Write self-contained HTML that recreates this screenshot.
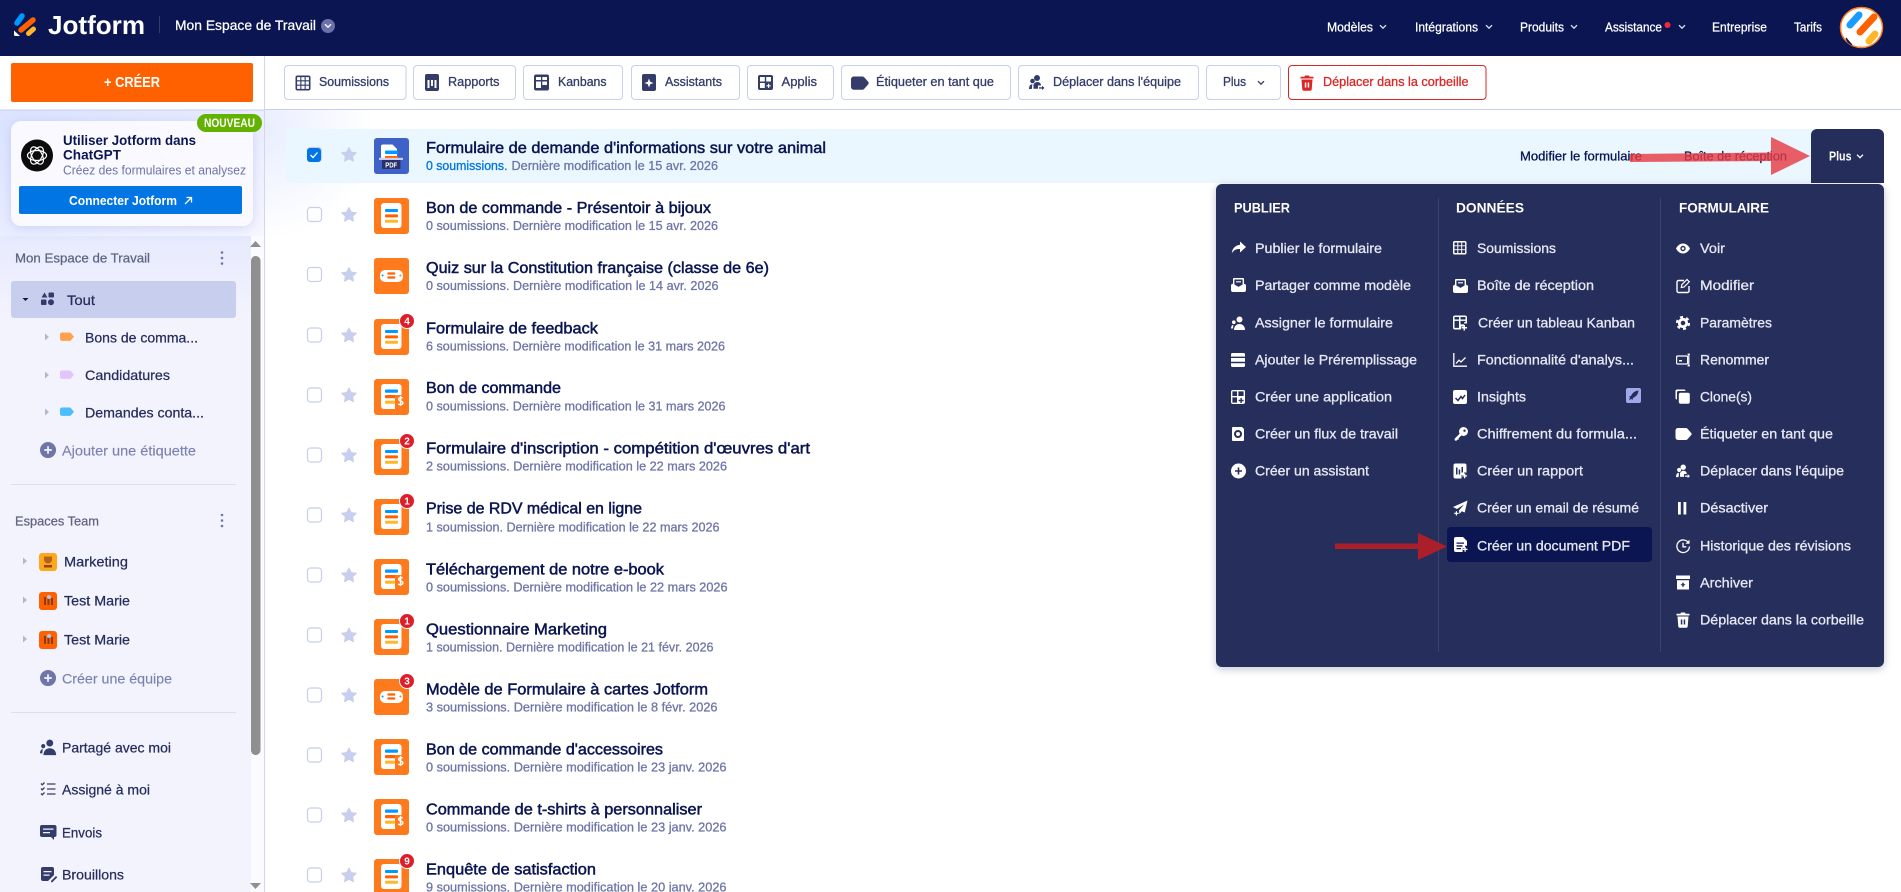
<!DOCTYPE html>
<html lang="fr">
<head>
<meta charset="utf-8">
<title>Jotform - Mon Espace de Travail</title>
<style>
html,body{margin:0;padding:0;width:1901px;height:892px;overflow:hidden;background:#fff}
svg{display:block}
text{font-family:"Liberation Sans",sans-serif;white-space:pre}
.h{font-size:16px;fill:#0a1551;stroke:#0a1551;stroke-width:.5px}
.s{font-size:13px;fill:#6f76a7;stroke:#6f76a7;stroke-width:.3px}
.b{font-size:13px;fill:#343c6a;stroke:#343c6a;stroke-width:.3px}
.w{font-size:14px;fill:#e6e8f2;stroke:#e6e8f2;stroke-width:.3px}
.mh{font-size:14px;font-weight:700;fill:#fff}
.n{font-size:13px;fill:#fff;stroke:#fff;stroke-width:.25px}
.sb{font-size:14px;fill:#252d5b;stroke:#252d5b;stroke-width:.25px}
.sg{font-size:14px;fill:#7b82ae;stroke:#7b82ae;stroke-width:.15px}
.st{font-size:13px;fill:#5f6480;stroke:#5f6480;stroke-width:.25px}
</style>
</head>
<body>
<svg width="1901" height="892" viewBox="0 0 1901 892" xmlns="http://www.w3.org/2000/svg">
<defs>
<linearGradient id="sg1" x1="0" y1="0" x2="1" y2="1"><stop offset="0" stop-color="#dbe3ff"/><stop offset=".6" stop-color="#eef0ff"/><stop offset="1" stop-color="#f7f7ff"/></linearGradient>
<linearGradient id="sg2" x1="0" y1="0" x2="0" y2="1"><stop offset="0" stop-color="#e6eafd"/><stop offset="1" stop-color="#f3f3fe"/></linearGradient>
<radialGradient id="mg" gradientUnits="userSpaceOnUse" cx="264" cy="130" r="110"><stop offset="0" stop-color="#e9eeff"/><stop offset="1" stop-color="#fff"/></radialGradient>
<filter id="sh" x="-5%" y="-5%" width="110%" height="110%"><feDropShadow dx="0" dy="2" stdDeviation="4" flood-color="#0a1551" flood-opacity=".25"/></filter>
<filter id="sh2" x="-15%" y="-15%" width="130%" height="130%"><feDropShadow dx="0" dy="2" stdDeviation="6" flood-color="#5f78e0" flood-opacity=".25"/></filter>

<g id="cs">
<rect x="307.500" y="9.500" width="14" height="14" rx="3" fill="#fff" stroke="#c8ceed" stroke-width="1.200"/>
<polygon transform="translate(349,17)" points="0,-7.500 2.300,-2.900 7.300,-2.300 3.600,1.200 4.500,6.200 0,3.800 -4.500,6.200 -3.600,1.200 -7.300,-2.300 -2.300,-2.900" fill="#c8ceed" stroke="#c8ceed" stroke-linejoin="round"/>
</g>
<g id="fi">
<rect width="35" height="36" rx="3" fill="#ff7a1c"/>
<rect x="7" y="5" width="20.500" height="25" rx="3" fill="#fff"/>
<rect x="11" y="11" width="13" height="3" rx="1" fill="#0099ff"/>
<rect x="11" y="16.400" width="13" height="3" rx="1" fill="#ff6100"/>
<rect x="11" y="21.800" width="13" height="3" rx="1" fill="#ffb629"/>
</g>
<g id="fd">
<rect width="35" height="36" rx="3" fill="#ff7a1c"/>
<rect x="7" y="5" width="20.500" height="25" rx="3" fill="#fff"/>
<rect x="11" y="10.500" width="13" height="3.200" rx="1" fill="#0099ff"/>
<rect x="11" y="16" width="12" height="3.200" rx="1" fill="#ff6100"/>
<rect x="11" y="21.600" width="10" height="3.200" rx="1" fill="#ffb629"/>
<rect x="21" y="16" width="9" height="15" fill="#ff7a1c"/>
<path d="M28.500 19.200c-.6-.8-3.800-1-3.800 1.100 0 2.300 4.200 1.300 4.200 3.600 0 2.200-3.600 2-4.600 1M26.600 16.900v10" fill="none" stroke="#fff" stroke-width="1.400"/>
</g>
<g id="fc">
<rect width="35" height="36" rx="3" fill="#ff7a1c"/>
<path d="M11 12h13a5 5 0 0 1 5 5v2a5 5 0 0 1-5 5H11a5 5 0 0 1-5-5v-2a5 5 0 0 1 5-5z" fill="#fff"/>
<rect x="13.300" y="14.400" width="8" height="2.200" rx="1" fill="#ff6100"/>
<rect x="13.300" y="18.400" width="8" height="2.200" rx="1" fill="#ff6100"/>
<circle cx="8.600" cy="17.500" r="1" fill="#0099ff"/>
<circle cx="26.400" cy="17.500" r="1" fill="#ff7a1c"/>
</g>

<path id="i-grid" fill-rule="evenodd" d="M2 0h11a2 2 0 0 1 2 2v11a2 2 0 0 1-2 2H2a2 2 0 0 1-2-2V2a2 2 0 0 1 2-2z M1.600 1.600v3.200h3.200V1.600z M5.900 1.600v3.200h3.200V1.600z M10.200 1.600v3.200h3.200V1.600z M1.600 5.900v3.200h3.200V5.900z M5.900 5.900v3.200h3.200V5.900z M10.200 5.900v3.200h3.200V5.900z M1.600 10.200v3.200h3.200v-3.200z M5.900 10.200v3.200h3.200v-3.200z M10.200 10.200v3.200h3.200v-3.200z"/>
<path id="i-env" fill-rule="evenodd" d="M3 0h9a1 1 0 0 1 1 1v4.600l2 1.200V12a2 2 0 0 1-2 2H2a2 2 0 0 1-2-2V6.800l2-1.200V1a1 1 0 0 1 1-1z M3.400 1.500v5l4.100 2.400 4.100-2.400v-5z M5 3.200h5v1.200H5z"/>
<g id="i-assign"><circle cx="8.500" cy="3.500" r="3"/><path d="M3 14c0-3.800 2.400-6 5.500-6s5.500 2.200 5.500 6z"/><circle cx="2.800" cy="6.200" r="1.800"/><path d="M0 12.500c0-2 .8-3.400 2.400-3.800L2 12.500z"/></g>
<path id="i-fill" d="M1.500 0h11A1.500 1.500 0 0 1 14 1.500V3.600H0V1.500A1.500 1.500 0 0 1 1.500 0z M0 5h14v3.800H0z M0 10.200h14v2.300A1.500 1.500 0 0 1 12.500 14h-11A1.500 1.500 0 0 1 0 12.500z"/>
<path id="i-app" fill-rule="evenodd" d="M2 0h10.500A1.500 1.500 0 0 1 14 1.500v10.500a2 2 0 0 1-2 2H2a2 2 0 0 1-2-2V2a2 2 0 0 1 2-2z M1.400 1.400v4.600h4.600V1.400z M7.400 1.400v4.600h5.200V1.400z M1.400 7.400v5.200h4.600V7.400z M9.400 8h1.400v1.800h1.800v1.400h-1.800V13H9.400v-1.800H7.600V9.800h1.800z"/>
<g id="i-flow"><path fill-rule="evenodd" d="M2 0h9l2 2v11a1 1 0 0 1-1 1H2a1 1 0 0 1-1-1V1a1 1 0 0 1 1-1z M7 3a4 4 0 1 0 0 8 4 4 0 0 0 0-8z"/><circle cx="7" cy="7" r="2"/></g>
<path id="i-plus" fill-rule="evenodd" d="M7.500 0a7.500 7.500 0 1 0 0 15 7.500 7.500 0 0 0 0-15z M6.700 4h1.600v2.700H11v1.600H8.300V11H6.700V8.300H4V6.700h2.700z"/>
<g id="i-kan"><path fill-rule="evenodd" d="M2 0h10a2 2 0 0 1 2 2v6h-3v3H8v3H2a2 2 0 0 1-2-2V2a2 2 0 0 1 2-2z M1.500 1.500v2.500h4.500V1.500z M7.500 1.500v2.500h5V1.500z M1.500 5.400v7h4.500v-7z M7.500 5.400v3.500h3.500V6.800h1.500V5.400z"/><path d="M10.500 9.500h1.500v2h2V13h-2v2h-1.500v-2h-2v-1.500h2z"/></g>
<g id="i-chart"><path d="M.8 0v13.200H14" fill="none" stroke="#fff" stroke-width="1.300"/><path d="M3 10.500l3-3.300 2 1.800L12.500 4.500" fill="none" stroke="#fff" stroke-width="1.300"/></g>
<g id="i-ins"><rect width="14" height="14" rx="2" fill="#fff"/><path d="M2.500 8l2.500 2.500 3-4 1.500 2 2.500-3.500" fill="none" stroke="#252d5b" stroke-width="1.500"/></g>
<g id="i-key"><path fill-rule="evenodd" d="M9.500 0a4.500 4.500 0 1 0 0 9 4.500 4.500 0 0 0 0-9z M10.500 2.500a1.200 1.200 0 1 0 0 2.400 1.200 1.200 0 0 0 0-2.400z"/><path d="M6 6.400l1.700 1.700-3 3-.1 1.500-1.500.1-.6 1-1.700-.2-.2-1.800z"/></g>
<g id="i-rep"><path fill-rule="evenodd" d="M2 0h9a2 2 0 0 1 2 2v7h-2.500v2.500H8V15H2a2 2 0 0 1-2-2V2a2 2 0 0 1 2-2z M2.500 4v7H4V4z M5.200 6v5h1.500V6z M8 3.500v5.500h1.500V3.500z"/><path d="M10.500 10h1.300v1.700h1.700V13h-1.700v1.700h-1.300V13H8.800v-1.300h1.700z"/></g>
<g id="i-mail"><path d="M14.500 0L0 6.500l4 2L11 4l-5 6 .5 3.500 2.200-2.800 3 1.300z"/><path d="M2.800 10.800h1.200v1.500h1.500v1.200H4V15H2.800v-1.500H1.300v-1.200h1.500z"/></g>
<g id="i-pdf"><path fill-rule="evenodd" d="M2 0h7l4 4v4.800h-2v2.400H8.600V15H2a2 2 0 0 1-2-2V2a2 2 0 0 1 2-2z M2.500 5.500v1.300h7.500V5.500z M2.500 8.300v1.300h6V8.300z M2.500 11v1.300h4.500V11z"/><path d="M10.500 10h1.300v1.700h1.700V13h-1.700v1.700h-1.300V13H8.800v-1.300h1.700z"/></g>
<g id="i-eye"><path fill-rule="evenodd" d="M7 1.500C3.500 1.500 1 4.500 0 6.500c1 2 3.500 5 7 5s6-3 7-5c-1-2-3.500-5-7-5z M7 3.800a2.700 2.700 0 1 0 0 5.400 2.700 2.700 0 0 0 0-5.400z"/><circle cx="7" cy="6.500" r="1.300"/></g>
<g id="i-edit"><path d="M8 1.500H2.500a1.500 1.500 0 0 0-1.500 1.500V12a1.500 1.500 0 0 0 1.500 1.500h9A1.500 1.500 0 0 0 13 12V7" fill="none" stroke="#fff" stroke-width="1.400"/><path d="M11 .5l2.300 2.300-5.200 5.200-2.800.5.500-2.800z" fill="none" stroke="#fff" stroke-width="1.200"/></g>
<g id="i-gear"><circle cx="7" cy="7" r="3.700" fill="none" stroke="#fff" stroke-width="2.800"/><circle cx="7" cy="7" r="6" fill="none" stroke="#fff" stroke-width="2.200" stroke-dasharray="3 3.280"/></g>
<g id="i-ren"><rect x=".6" y="3" width="11" height="8" rx="1" fill="none" stroke="#fff" stroke-width="1.200"/><path d="M3 8.500h3V7H3z"/><path d="M11.500 1.200h2.500M12.800 1.200v11.600M11.500 12.800h2.500" fill="none" stroke="#fff" stroke-width="1.200"/></g>
<g id="i-clone"><path d="M1.500 0h7A1.500 1.500 0 0 1 10 1.500H3A1.500 1.500 0 0 0 1.500 3v7A1.500 1.500 0 0 1 0 8.500v-7A1.500 1.500 0 0 1 1.500 0z"/><rect x="3.300" y="3.300" width="11" height="11" rx="2"/></g>
<path id="i-tag" d="M2.500 0H10.500a2 2 0 0 1 1.500.7l3.500 4a1.800 1.800 0 0 1 0 2.600l-3.500 4a2 2 0 0 1-1.500.7H2.500A2.500 2.500 0 0 1 0 9.500V2.500A2.500 2.500 0 0 1 2.500 0z"/>
<g id="i-team"><circle cx="8" cy="3" r="3"/><circle cx="3.500" cy="6" r="2.300"/><path d="M4.500 9.500c1-1.800 2.200-2.500 3.700-2.500 2.200 0 3.800 1.300 3.800 3.500H9v3.300H4.500z"/><path d="M0 14c0-3 1.300-4.800 3.300-4.800L2.800 14z"/><path d="M10 12.200h3v-1.500l2.500 2.200-2.500 2.200v-1.500h-3z"/></g>
<path id="i-pause" d="M2.500 1h2.800v12.500H2.500z M8 1h2.800v12.500H8z"/>
<g id="i-hist"><path d="M12.600 4A6.300 6.300 0 1 0 13.500 7.500" fill="none" stroke="#fff" stroke-width="1.300"/><path d="M13.500 .8v4h-4z"/><path d="M7 3.800v4h3.200" fill="none" stroke="#fff" stroke-width="1.300"/></g>
<path id="i-arch" fill-rule="evenodd" d="M0 0h14v3.500H0z M1 4.800h12V14H1z M6.200 7.200v1.500H4.800v1h1.400v1.500h1.600V9.700h1.400v-1H7.800V7.200z"/>
<path id="i-trash" fill-rule="evenodd" d="M5 0h4l.6 1.200H13.500V3H.5V1.200H4.400z M1.500 4h11l-.8 10a1.500 1.500 0 0 1-1.500 1.300H3.800a1.500 1.500 0 0 1-1.500-1.300z M4.800 7v5h1.500V7z M7.700 7v5h1.500V7z"/>

<path id="t-rep" fill-rule="evenodd" d="M2 0h10a2 2 0 0 1 2 2v13a2 2 0 0 1-2 2H2a2 2 0 0 1-2-2V2a2 2 0 0 1 2-2z M2.500 6v8h2V6z M6 6v6h2V6z M9.500 6v8h2V6z"/>
<path id="t-kan" fill-rule="evenodd" d="M2 0h11a2 2 0 0 1 2 2v12a2 2 0 0 1-2 2H2a2 2 0 0 1-2-2V2a2 2 0 0 1 2-2z M2 2.500v3h5v-3z M8.300 2.500v3H13v-3z M2 7v6.500h5V7z M8.300 7v3.500H13V7z"/>
<path id="t-ass" fill-rule="evenodd" d="M2 0h10a2 2 0 0 1 2 2v13a2 2 0 0 1-2 2H2a2 2 0 0 1-2-2V2a2 2 0 0 1 2-2z M7 4.500L5.800 7.800 2.500 9l3.300 1.200L7 13.500l1.200-3.300L11.500 9 8.200 7.800z"/>
<path id="t-app" fill-rule="evenodd" d="M2 0h11a2 2 0 0 1 2 2v11a2 2 0 0 1-2 2H2a2 2 0 0 1-2-2V2a2 2 0 0 1 2-2z M2 2v4.500h4.800V2z M8.200 2v4.500H13V2z M2 8v5h4.800V8z M10 8.700h1.200v1.500h1.500v1.200h-1.500v1.500H10v-1.500H8.500v-1.200H10z"/>

<path id="caret" d="M0 0l4 3.500-4 3.500z"/>
<polyline id="chev" points="-3,-1.800 0,1.200 3,-1.800" fill="none" stroke-width="1.300"/>
</defs>

<!-- Main background -->
<rect width="1901" height="892" fill="#fff"/>
<rect x="265" y="110" width="200" height="300" fill="url(#mg)"/>

<!-- Header -->
<g>
<rect width="1901" height="56" fill="#0a1551"/>
<line x1="17" y1="23" x2="22" y2="16" stroke="#0099ff" stroke-width="5.500" stroke-linecap="round"/>
<line x1="21" y1="30" x2="33" y2="20" stroke="#ff6100" stroke-width="5.500" stroke-linecap="round"/>
<line x1="28.500" y1="33.500" x2="33.500" y2="29" stroke="#ffb629" stroke-width="5" stroke-linecap="round"/>
<path d="M14 30.500l6 5.500h-4.500a1.500 1.500 0 0 1-1.500-1.500z" fill="#fff"/>
<text x="48" y="34" font-size="26" font-weight="700" fill="#fff" textLength="97" lengthAdjust="spacingAndGlyphs">Jotform</text>
<line x1="159.500" y1="16" x2="159.500" y2="33" stroke="#343c6a"/>
<text class="n" x="175" y="30" style="font-size:14px" textLength="141" lengthAdjust="spacingAndGlyphs">Mon Espace de Travail</text>
<circle cx="328" cy="26" r="7" fill="#6b70a8"/>
<use href="#chev" x="328" y="26" stroke="#fff"/>
<text class="n" x="1327" y="31.500" textLength="46" lengthAdjust="spacingAndGlyphs">Modèles</text>
<use href="#chev" x="1383" y="27" stroke="#dfe1ef"/>
<text class="n" x="1415" y="31.500" textLength="63" lengthAdjust="spacingAndGlyphs">Intégrations</text>
<use href="#chev" x="1489" y="27" stroke="#dfe1ef"/>
<text class="n" x="1520" y="31.500" textLength="44" lengthAdjust="spacingAndGlyphs">Produits</text>
<use href="#chev" x="1574" y="27" stroke="#dfe1ef"/>
<text class="n" x="1605" y="31.500" textLength="57" lengthAdjust="spacingAndGlyphs">Assistance</text>
<circle cx="1667.500" cy="25" r="3" fill="#ee2a3a"/>
<use href="#chev" x="1682" y="27" stroke="#dfe1ef"/>
<text class="n" x="1712" y="31.500" textLength="55" lengthAdjust="spacingAndGlyphs">Entreprise</text>
<text class="n" x="1794" y="31.500" textLength="28" lengthAdjust="spacingAndGlyphs">Tarifs</text>
<ellipse cx="1861.500" cy="27.500" rx="21" ry="20" fill="#fff" stroke="#ff7a1c" stroke-width="1.500"/>
<line x1="1850" y1="25" x2="1859" y2="15" stroke="#1a9bff" stroke-width="7" stroke-linecap="round"/>
<line x1="1860" y1="32" x2="1874" y2="17" stroke="#ff6100" stroke-width="7" stroke-linecap="round"/>
<line x1="1869" y1="41" x2="1875" y2="34" stroke="#ffb629" stroke-width="7" stroke-linecap="round"/>
<path d="M1846 38l6 7a19 19 0 0 1-4.500-3.500z" fill="#0a1551" stroke="#0a1551"/>
</g>

<!-- Sidebar -->
<g>
<rect x="0" y="56" width="264" height="54" fill="#fff"/>
<rect x="0" y="110" width="264" height="126" fill="url(#sg1)"/>
<rect x="0" y="236" width="251" height="80" fill="url(#sg2)"/>
<rect x="0" y="316" width="251" height="576" fill="#f3f3fe"/>
<rect x="251" y="236" width="13" height="656" fill="#fbfbff"/>
<rect x="264" y="56" width="1" height="836" fill="#d3d7ee"/>
<rect x="0" y="109.500" width="264" height="1" fill="#c8ceed"/>
<rect x="11" y="63" width="242" height="39" rx="2" fill="#ff6100"/>
<text x="104" y="87" font-size="15" font-weight="700" fill="#fff" textLength="56" lengthAdjust="spacingAndGlyphs">+ CRÉER</text>

<rect x="11" y="121" width="242" height="105" rx="10" fill="#f9f9ff" filter="url(#sh2)"/>
<rect x="197" y="114" width="65" height="18" rx="9" fill="#64b200"/>
<text x="204" y="127" font-size="12" font-weight="700" fill="#fff" textLength="51" lengthAdjust="spacingAndGlyphs">NOUVEAU</text>
<circle cx="37" cy="155.500" r="16" fill="#0c0c0c"/>
<g fill="none" stroke="#fff" stroke-width="1.200">
<ellipse cx="37" cy="155.500" rx="9.500" ry="5"/>
<ellipse cx="37" cy="155.500" rx="9.500" ry="5" transform="rotate(60 37 155.500)"/>
<ellipse cx="37" cy="155.500" rx="9.500" ry="5" transform="rotate(120 37 155.500)"/>
</g>
<text x="63" y="145" font-size="14" font-weight="700" fill="#0a1551" textLength="133" lengthAdjust="spacingAndGlyphs">Utiliser Jotform dans</text>
<text x="63" y="159.500" font-size="14" font-weight="700" fill="#0a1551" textLength="58" lengthAdjust="spacingAndGlyphs">ChatGPT</text>
<text x="63" y="174.500" font-size="13" fill="#6c73a8" textLength="183" lengthAdjust="spacingAndGlyphs">Créez des formulaires et analysez</text>
<rect x="19" y="186" width="223" height="28" rx="2" fill="#0075e3"/>
<text x="69" y="205" font-size="13" font-weight="700" fill="#fff" textLength="108" lengthAdjust="spacingAndGlyphs">Connecter Jotform</text>
<path d="M185 204l6-6M186.500 197.500h5v5" fill="none" stroke="#fff" stroke-width="1.300"/>

<text class="st" x="15" y="262.500" textLength="135" lengthAdjust="spacingAndGlyphs">Mon Espace de Travail</text>
<g fill="#6f76a7"><circle cx="222" cy="252.500" r="1.300"/><circle cx="222" cy="258" r="1.300"/><circle cx="222" cy="263.500" r="1.300"/></g>

<rect x="11" y="281" width="225" height="37" rx="3" fill="#c8ceed"/>
<path d="M22.500 298h6l-3 3z" fill="#0a1551"/>
<g fill="#343c6a"><path d="M44.500 292.500l3 5h-6z"/><rect x="48.500" y="292.500" width="5.500" height="5" rx="1"/><rect x="41" y="299.500" width="5.500" height="5.500" rx="1"/><circle cx="51" cy="302.300" r="3"/></g>
<text class="sb" x="67" y="305" textLength="28" lengthAdjust="spacingAndGlyphs">Tout</text>

<use href="#caret" x="45" y="333.500" fill="#b4b7cc"/>
<path d="M62 332.500h7.500a2 2 0 0 1 1.500.7l3 3.500-3 3.500a2 2 0 0 1-1.500.7H62a2 2 0 0 1-2-2v-4.400a2 2 0 0 1 2-2z" fill="#ffa14d"/>
<text class="sb" x="85" y="342.500" textLength="113" lengthAdjust="spacingAndGlyphs">Bons de comma...</text>
<use href="#caret" x="45" y="371.500" fill="#b4b7cc"/>
<path d="M62 370.500h7.500a2 2 0 0 1 1.500.7l3 3.500-3 3.500a2 2 0 0 1-1.500.7H62a2 2 0 0 1-2-2v-4.400a2 2 0 0 1 2-2z" fill="#e3c4fb"/>
<text class="sb" x="85" y="380" textLength="85" lengthAdjust="spacingAndGlyphs">Candidatures</text>
<use href="#caret" x="45" y="408.500" fill="#b4b7cc"/>
<path d="M62 407.500h7.500a2 2 0 0 1 1.500.7l3 3.500-3 3.500a2 2 0 0 1-1.500.7H62a2 2 0 0 1-2-2v-4.400a2 2 0 0 1 2-2z" fill="#4dbefc"/>
<text class="sb" x="85" y="417.500" textLength="119" lengthAdjust="spacingAndGlyphs">Demandes conta...</text>
<use href="#i-plus" transform="translate(40,442) scale(1.070)" fill="#6f76a7"/>
<text class="sg" x="62" y="455.500" textLength="134" lengthAdjust="spacingAndGlyphs">Ajouter une étiquette</text>
<rect x="11" y="484" width="225" height="1" fill="#dcdff0"/>

<text class="st" x="15" y="525.500" textLength="84" lengthAdjust="spacingAndGlyphs">Espaces Team</text>
<g fill="#6f76a7"><circle cx="222" cy="515" r="1.300"/><circle cx="222" cy="520.500" r="1.300"/><circle cx="222" cy="526" r="1.300"/></g>

<use href="#caret" x="23" y="557.500" fill="#b4b7cc"/>
<rect x="39" y="553" width="18" height="18" rx="3" fill="#ffa81e"/>
<path d="M44 556.500h8v3a4 4 0 0 1-8 0z" fill="#b5611a"/><rect x="44" y="565" width="8" height="2.500" fill="#8a4a20"/>
<text class="sb" x="64" y="566.500" textLength="64" lengthAdjust="spacingAndGlyphs">Marketing</text>
<use href="#caret" x="23" y="596.500" fill="#b4b7cc"/>
<rect x="39" y="592" width="18" height="18" rx="3" fill="#ff6100"/>
<g fill="#8a3b10"><rect x="44" y="597" width="2" height="8"/><rect x="47.500" y="596" width="2" height="9"/><rect x="51" y="598" width="2" height="7"/></g><circle cx="49" cy="597" r="2" fill="#a9c8f0"/>
<text class="sb" x="64" y="605.500" textLength="66" lengthAdjust="spacingAndGlyphs">Test Marie</text>
<use href="#caret" x="23" y="635.500" fill="#b4b7cc"/>
<rect x="39" y="631" width="18" height="18" rx="3" fill="#ff6100"/>
<g fill="#8a3b10"><rect x="44" y="636" width="2" height="8"/><rect x="47.500" y="635" width="2" height="9"/><rect x="51" y="637" width="2" height="7"/></g><circle cx="49" cy="636" r="2" fill="#a9c8f0"/>
<text class="sb" x="64" y="644.500" textLength="66" lengthAdjust="spacingAndGlyphs">Test Marie</text>
<use href="#i-plus" transform="translate(40,670) scale(1.070)" fill="#6f76a7"/>
<text class="sg" x="62" y="683.500" textLength="110" lengthAdjust="spacingAndGlyphs">Créer une équipe</text>
<rect x="11" y="712" width="225" height="1" fill="#dcdff0"/>

<use href="#i-assign" transform="translate(40,739) scale(1.150)" fill="#343c6a"/>
<text class="sb" x="62" y="752.500" textLength="109" lengthAdjust="spacingAndGlyphs">Partagé avec moi</text>
<g fill="none" stroke="#343c6a" stroke-width="1.300"><path d="M47 784h8.500M47 789h8.500M47 794h8.500"/><path d="M41 783.500l1.300 1.300 2.200-2.300M41 788.500l1.300 1.300 2.200-2.300M41 793.500l1.300 1.300 2.200-2.300"/></g>
<text class="sb" x="62" y="794.500" textLength="88" lengthAdjust="spacingAndGlyphs">Assigné à moi</text>
<path fill-rule="evenodd" fill="#343c6a" d="M42 825h12.500a2 2 0 0 1 2 2v8a2 2 0 0 1-2 2H54v3l-3-3H42a2 2 0 0 1-2-2v-8a2 2 0 0 1 2-2z M43 828.500v1.300h10.500v-1.300z M43 832v1.300h7v-1.300z"/>
<text class="sb" x="62" y="837.500" textLength="40" lengthAdjust="spacingAndGlyphs">Envois</text>
<path fill-rule="evenodd" fill="#343c6a" d="M43 867h9a2 2 0 0 1 2 2v6l-6 6H43a2 2 0 0 1-2-2v-10a2 2 0 0 1 2-2z M43.500 871v1.300h8V871z M43.500 874.500v1.300h6v-1.300z"/>
<path d="M51 881l5-5 1.300 1.300-5 5h-1.300z" fill="#343c6a"/>
<text class="sb" x="62" y="879.500" textLength="62" lengthAdjust="spacingAndGlyphs">Brouillons</text>

<path d="M255.500 241l5.500 6h-11z" fill="#8f8f8f"/>
<rect x="251" y="256" width="9.500" height="499" rx="4.700" fill="#8f8f8f"/>
<path d="M250 883h11l-5.500 6z" fill="#8f8f8f"/>
</g>

<!-- Toolbar -->
<g>
<rect x="265" y="109" width="1636" height="1" fill="#c8ceed"/>
<g fill="#fff" stroke="#c8ceed" stroke-width="1">
<rect x="284.500" y="65.500" width="121.500" height="34" rx="3.500"/>
<rect x="413.500" y="65.500" width="102" height="34" rx="3.500"/>
<rect x="523.500" y="65.500" width="99" height="34" rx="3.500"/>
<rect x="631.500" y="65.500" width="108" height="34" rx="3.500"/>
<rect x="747.500" y="65.500" width="86" height="34" rx="3.500"/>
<rect x="841.500" y="65.500" width="169" height="34" rx="3.500"/>
<rect x="1018.500" y="65.500" width="180" height="34" rx="3.500"/>
<rect x="1206.500" y="65.500" width="74" height="34" rx="3.500"/>
</g>
<rect x="1288.500" y="65.500" width="197.500" height="34" rx="3.500" fill="#fff" stroke="#dc2626"/>
<use href="#i-grid" x="295.500" y="75.500" fill="#343c6a"/>
<text class="b" x="319" y="86" textLength="70" lengthAdjust="spacingAndGlyphs">Soumissions</text>
<use href="#t-rep" x="425" y="74" fill="#343c6a"/>
<text class="b" x="448" y="86" textLength="51.500" lengthAdjust="spacingAndGlyphs">Rapports</text>
<use href="#t-kan" x="534" y="74.500" fill="#343c6a"/>
<text class="b" x="558" y="86" textLength="48.500" lengthAdjust="spacingAndGlyphs">Kanbans</text>
<use href="#t-ass" x="642" y="74" fill="#343c6a"/>
<text class="b" x="665" y="86" textLength="57" lengthAdjust="spacingAndGlyphs">Assistants</text>
<use href="#t-app" x="758" y="75" fill="#343c6a"/>
<text class="b" x="781.500" y="86" textLength="35.500" lengthAdjust="spacingAndGlyphs">Applis</text>
<use href="#i-tag" transform="translate(851,76.500) scale(1.100)" fill="#343c6a"/>
<text class="b" x="876" y="86" textLength="118" lengthAdjust="spacingAndGlyphs">Étiqueter en tant que</text>
<use href="#i-team" x="1029" y="75" fill="#343c6a"/>
<text class="b" x="1053" y="86" textLength="128" lengthAdjust="spacingAndGlyphs">Déplacer dans l'équipe</text>
<text class="b" x="1223" y="86" textLength="23" lengthAdjust="spacingAndGlyphs">Plus</text>
<use href="#chev" x="1261" y="83" stroke="#343c6a"/>
<use href="#i-trash" x="1300" y="75.500" fill="#dc2626"/>
<text class="b" style="fill:#dc2626;stroke:#dc2626" x="1323" y="86" textLength="145.500" lengthAdjust="spacingAndGlyphs">Déplacer dans la corbeille</text>
</g>

<!-- Row 1 -->
<rect x="286" y="129" width="1540" height="54" rx="4" fill="#ebf7ff"/>
<g>
<use href="#cs" y="138"/>
<rect x="307" y="148" width="14" height="14" rx="3" fill="#0075e3"/>
<path d="M310.500 155l2.500 2.500 4.500-5" fill="none" stroke="#fff" stroke-width="1.300"/>
<rect x="374" y="138" width="35" height="36" rx="3" fill="#3f62c8"/>
<path d="M383 144.500h9.500l4.500 4.500v9.500h-16v-12a2 2 0 0 1 2-2z" fill="#fff"/>
<rect x="385" y="150.500" width="13" height="3.500" rx="1" fill="#0099ff"/>
<rect x="385" y="156" width="13" height="2.200" fill="#ff6100"/>
<rect x="379" y="157.800" width="24" height="2.200" fill="#c8d0f0"/>
<rect x="382" y="160" width="18.500" height="9" rx="1" fill="#29316b"/>
<text x="385.200" y="167.500" font-size="7.500" font-weight="700" fill="#fff" textLength="12" lengthAdjust="spacingAndGlyphs">PDF</text>
<text class="h" x="426" y="153" textLength="400" lengthAdjust="spacingAndGlyphs">Formulaire de demande d'informations sur votre animal</text>
<text class="s" style="fill:#0075e3;stroke:#0075e3" x="426" y="170" textLength="81.500" lengthAdjust="spacingAndGlyphs">0 soumissions.</text>
<text class="s" x="511.500" y="170" textLength="206.500" lengthAdjust="spacingAndGlyphs">Dernière modification le 15 avr. 2026</text>
<text class="b" style="fill:#0a1551;stroke:#0a1551" x="1520" y="160.500" textLength="122" lengthAdjust="spacingAndGlyphs">Modifier le formulaire</text>
<text class="b" style="fill:#0a1551;stroke:#0a1551" x="1684" y="160.500" textLength="103" lengthAdjust="spacingAndGlyphs">Boîte de réception</text>
<path d="M1811 135a6 6 0 0 1 6-6h61a6 6 0 0 1 6 6v48h-73z" fill="#252d5b"/>
<text x="1829" y="160.500" font-size="13" font-weight="700" fill="#fff" textLength="22.500" lengthAdjust="spacingAndGlyphs">Plus</text>
<use href="#chev" x="1860" y="156.500" stroke="#fff"/>
<path d="M1630 154l141-1.500V137l39 19-39 19v-14l-141 1z" fill="#e63c46" fill-opacity=".82"/>
</g>

<!-- Rows -->
<g>
<use href="#cs" y="198"/><use href="#fi" x="374" y="198"/>
<text class="h" x="426" y="213" textLength="285" lengthAdjust="spacingAndGlyphs">Bon de commande - Présentoir à bijoux</text>
<text class="s" x="426" y="230" textLength="292" lengthAdjust="spacingAndGlyphs">0 soumissions. Dernière modification le 15 avr. 2026</text>
</g>
<g>
<use href="#cs" y="258"/><use href="#fc" x="374" y="258"/>
<text class="h" x="426" y="273" textLength="343" lengthAdjust="spacingAndGlyphs">Quiz sur la Constitution française (classe de 6e)</text>
<text class="s" x="426" y="290" textLength="292.500" lengthAdjust="spacingAndGlyphs">0 soumissions. Dernière modification le 14 avr. 2026</text>
</g>
<g>
<use href="#cs" y="318.500"/><use href="#fi" x="374" y="319"/>
<circle cx="407" cy="321" r="7.500" fill="#dc1f2a" stroke="#fff"/>
<text x="407" y="324.500" font-size="10" font-weight="700" fill="#fff" text-anchor="middle">4</text>
<text class="h" x="426" y="333.500" textLength="172" lengthAdjust="spacingAndGlyphs">Formulaire de feedback</text>
<text class="s" x="426" y="350.500" textLength="299" lengthAdjust="spacingAndGlyphs">6 soumissions. Dernière modification le 31 mars 2026</text>
</g>
<g>
<use href="#cs" y="378.500"/><use href="#fd" x="374" y="379"/>
<text class="h" x="426" y="393" textLength="135" lengthAdjust="spacingAndGlyphs">Bon de commande</text>
<text class="s" x="426" y="410.500" textLength="299.500" lengthAdjust="spacingAndGlyphs">0 soumissions. Dernière modification le 31 mars 2026</text>
</g>
<g>
<use href="#cs" y="438.500"/><use href="#fi" x="374" y="439"/>
<circle cx="407" cy="441" r="7.500" fill="#dc1f2a" stroke="#fff"/>
<text x="407" y="444.500" font-size="10" font-weight="700" fill="#fff" text-anchor="middle">2</text>
<text class="h" x="426" y="453.500" textLength="384" lengthAdjust="spacingAndGlyphs">Formulaire d'inscription - compétition d'œuvres d'art</text>
<text class="s" x="426" y="470.500" textLength="301" lengthAdjust="spacingAndGlyphs">2 soumissions. Dernière modification le 22 mars 2026</text>
</g>
<g>
<use href="#cs" y="498.500"/><use href="#fi" x="374" y="499"/>
<circle cx="407" cy="501" r="7.500" fill="#dc1f2a" stroke="#fff"/>
<text x="407" y="504.500" font-size="10" font-weight="700" fill="#fff" text-anchor="middle">1</text>
<text class="h" x="426" y="513.500" textLength="216" lengthAdjust="spacingAndGlyphs">Prise de RDV médical en ligne</text>
<text class="s" x="426" y="531.500" textLength="293.500" lengthAdjust="spacingAndGlyphs">1 soumission. Dernière modification le 22 mars 2026</text>
</g>
<g>
<use href="#cs" y="558.500"/><use href="#fd" x="374" y="559"/>
<text class="h" x="426" y="574.500" textLength="238" lengthAdjust="spacingAndGlyphs">Téléchargement de notre e-book</text>
<text class="s" x="426" y="591.500" textLength="301.500" lengthAdjust="spacingAndGlyphs">0 soumissions. Dernière modification le 22 mars 2026</text>
</g>
<g>
<use href="#cs" y="618.500"/><use href="#fi" x="374" y="619"/>
<circle cx="407" cy="621" r="7.500" fill="#dc1f2a" stroke="#fff"/>
<text x="407" y="624.500" font-size="10" font-weight="700" fill="#fff" text-anchor="middle">1</text>
<text class="h" x="426" y="634.500" textLength="181" lengthAdjust="spacingAndGlyphs">Questionnaire Marketing</text>
<text class="s" x="426" y="651.500" textLength="287.500" lengthAdjust="spacingAndGlyphs">1 soumission. Dernière modification le 21 févr. 2026</text>
</g>
<g>
<use href="#cs" y="678.500"/><use href="#fc" x="374" y="679"/>
<circle cx="407" cy="681" r="7.500" fill="#dc1f2a" stroke="#fff"/>
<text x="407" y="684.500" font-size="10" font-weight="700" fill="#fff" text-anchor="middle">3</text>
<text class="h" x="426" y="694.500" textLength="282" lengthAdjust="spacingAndGlyphs">Modèle de Formulaire à cartes Jotform</text>
<text class="s" x="426" y="711.500" textLength="291.500" lengthAdjust="spacingAndGlyphs">3 soumissions. Dernière modification le 8 févr. 2026</text>
</g>
<g>
<use href="#cs" y="738.500"/><use href="#fd" x="374" y="739"/>
<text class="h" x="426" y="754.500" textLength="237" lengthAdjust="spacingAndGlyphs">Bon de commande d'accessoires</text>
<text class="s" x="426" y="771.500" textLength="300.500" lengthAdjust="spacingAndGlyphs">0 soumissions. Dernière modification le 23 janv. 2026</text>
</g>
<g>
<use href="#cs" y="798.500"/><use href="#fd" x="374" y="799"/>
<text class="h" x="426" y="814.500" textLength="276" lengthAdjust="spacingAndGlyphs">Commande de t-shirts à personnaliser</text>
<text class="s" x="426" y="831.500" textLength="300.500" lengthAdjust="spacingAndGlyphs">0 soumissions. Dernière modification le 23 janv. 2026</text>
</g>
<g>
<use href="#cs" y="858.500"/><use href="#fi" x="374" y="859"/>
<circle cx="407" cy="861" r="7.500" fill="#dc1f2a" stroke="#fff"/>
<text x="407" y="864.500" font-size="10" font-weight="700" fill="#fff" text-anchor="middle">9</text>
<text class="h" x="426" y="874.500" textLength="170" lengthAdjust="spacingAndGlyphs">Enquête de satisfaction</text>
<text class="s" x="426" y="891.500" textLength="300.500" lengthAdjust="spacingAndGlyphs">9 soumissions. Dernière modification le 20 janv. 2026</text>
</g>

<!-- Dropdown -->
<g>
<rect x="1216" y="184" width="668" height="483" rx="6" fill="#252d5b" filter="url(#sh)"/>
<rect x="1438" y="198" width="1" height="454" fill="#3a4270"/>
<rect x="1660" y="198" width="1" height="454" fill="#3a4270"/>
<text class="mh" x="1234" y="212.500" textLength="56" lengthAdjust="spacingAndGlyphs">PUBLIER</text>
<text class="mh" x="1456" y="212.500" textLength="68" lengthAdjust="spacingAndGlyphs">DONNÉES</text>
<text class="mh" x="1679" y="212.500" textLength="90" lengthAdjust="spacingAndGlyphs">FORMULAIRE</text>

<g fill="#fff">
<path transform="translate(1231,241)" d="M9 .5l6 5.500-6 5.500V8C5.500 7.800 2.600 9 .8 12.300 1.200 7.700 4.200 4.300 9 3.800z"/>
<use href="#i-env" x="1231" y="278"/>
<use href="#i-assign" x="1231" y="316"/>
<use href="#i-fill" x="1231" y="353"/>
<use href="#i-app" x="1231" y="390"/>
<use href="#i-flow" x="1231" y="427"/>
<use href="#i-plus" x="1231" y="463.500"/>

<use href="#i-grid" transform="translate(1453,241) scale(.9)"/>
<use href="#i-env" x="1453" y="279"/>
<use href="#i-kan" x="1453" y="315.500"/>
<use href="#i-chart" x="1453" y="353"/>
<use href="#i-ins" x="1453" y="390"/>
<use href="#i-key" x="1454" y="427"/>
<use href="#i-rep" x="1453.500" y="463.500"/>
<use href="#i-mail" x="1453" y="500.500"/>
<use href="#i-eye" x="1676" y="242"/>
<use href="#i-edit" x="1676" y="279"/>
<use href="#i-gear" x="1676" y="316"/>
<use href="#i-ren" x="1676" y="353"/>
<use href="#i-clone" x="1675.500" y="389.500"/>
<use href="#i-tag" transform="translate(1675.500,428) scale(1)"/>
<use href="#i-team" transform="translate(1676,464.500) scale(.9)"/>
<use href="#i-pause" x="1675.500" y="501"/>
<use href="#i-hist" x="1676" y="539"/>
<use href="#i-arch" x="1676" y="575.500"/>
<use href="#i-trash" x="1676" y="612.500"/>
</g>

<text class="w" x="1255" y="253" textLength="127" lengthAdjust="spacingAndGlyphs">Publier le formulaire</text>
<text class="w" x="1255" y="290" textLength="156" lengthAdjust="spacingAndGlyphs">Partager comme modèle</text>
<text class="w" x="1255" y="327.500" textLength="138" lengthAdjust="spacingAndGlyphs">Assigner le formulaire</text>
<text class="w" x="1255" y="364.500" textLength="162" lengthAdjust="spacingAndGlyphs">Ajouter le Préremplissage</text>
<text class="w" x="1255" y="401.500" textLength="137" lengthAdjust="spacingAndGlyphs">Créer une application</text>
<text class="w" x="1255" y="438.500" textLength="143" lengthAdjust="spacingAndGlyphs">Créer un flux de travail</text>
<text class="w" x="1255" y="475.500" textLength="114" lengthAdjust="spacingAndGlyphs">Créer un assistant</text>

<text class="w" x="1477" y="253" textLength="79" lengthAdjust="spacingAndGlyphs">Soumissions</text>
<text class="w" x="1477" y="290" textLength="117" lengthAdjust="spacingAndGlyphs">Boîte de réception</text>
<text class="w" x="1478" y="327.500" textLength="157" lengthAdjust="spacingAndGlyphs">Créer un tableau Kanban</text>
<text class="w" x="1477" y="364.500" textLength="157" lengthAdjust="spacingAndGlyphs">Fonctionnalité d'analys...</text>
<text class="w" x="1477" y="401.500" textLength="49" lengthAdjust="spacingAndGlyphs">Insights</text>
<rect x="1626" y="388" width="15" height="15" rx="2" fill="#a0a9e8"/>
<path d="M1638.500 390.500c-4 .3-6 2.500-7.500 5.500l-2 .5 1 1-1 2.500 2.500-1 1 1 .5-2c3-1.500 5.200-3.500 5.500-7.500z" fill="#252d5b"/>
<text class="w" x="1477" y="438.500" textLength="160" lengthAdjust="spacingAndGlyphs">Chiffrement du formula...</text>
<text class="w" x="1477" y="475.500" textLength="106" lengthAdjust="spacingAndGlyphs">Créer un rapport</text>
<text class="w" x="1477" y="512.500" textLength="162" lengthAdjust="spacingAndGlyphs">Créer un email de résumé</text>
<rect x="1447" y="527" width="205" height="35" rx="4" fill="#0a1551"/>
<use href="#i-pdf" x="1454" y="537" fill="#fff"/>
<text class="w" x="1477" y="550.500" textLength="153" lengthAdjust="spacingAndGlyphs">Créer un document PDF</text>

<text class="w" x="1700" y="253" textLength="25" lengthAdjust="spacingAndGlyphs">Voir</text>
<text class="w" x="1700" y="290" textLength="54" lengthAdjust="spacingAndGlyphs">Modifier</text>
<text class="w" x="1700" y="327.500" textLength="72" lengthAdjust="spacingAndGlyphs">Paramètres</text>
<text class="w" x="1700" y="364.500" textLength="69" lengthAdjust="spacingAndGlyphs">Renommer</text>
<text class="w" x="1700" y="401.500" textLength="52" lengthAdjust="spacingAndGlyphs">Clone(s)</text>
<text class="w" x="1700" y="438.500" textLength="133" lengthAdjust="spacingAndGlyphs">Étiqueter en tant que</text>
<text class="w" x="1700" y="475.500" textLength="144" lengthAdjust="spacingAndGlyphs">Déplacer dans l'équipe</text>
<text class="w" x="1700" y="512.500" textLength="68" lengthAdjust="spacingAndGlyphs">Désactiver</text>
<text class="w" x="1700" y="550.500" textLength="151" lengthAdjust="spacingAndGlyphs">Historique des révisions</text>
<text class="w" x="1700" y="587.500" textLength="53" lengthAdjust="spacingAndGlyphs">Archiver</text>
<text class="w" x="1700" y="624.500" textLength="164" lengthAdjust="spacingAndGlyphs">Déplacer dans la corbeille</text>

<path d="M1335 543.500h83V533l29 13.500-29 13.500v-11h-83z" fill="#ab1f2b"/>
</g>
</svg>
</body>
</html>
